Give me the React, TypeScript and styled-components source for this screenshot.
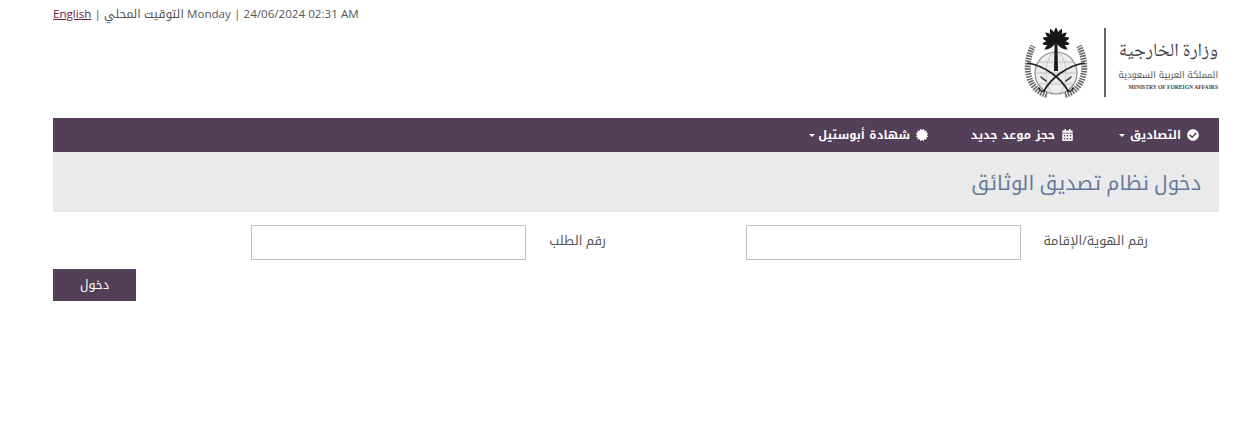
import React from "react";
import styled, { createGlobalStyle } from "styled-components";
import { FaCheckCircle, FaCalendarAlt, FaCertificate } from "react-icons/fa";

const Global = createGlobalStyle`
  html, body { margin: 0; padding: 0; background: #fff; }
  body { font-family: "Open Sans", "Noto Kufi Arabic", "DejaVu Sans", sans-serif; color: #444; }
`;

const Page = styled.div`
  direction: rtl;
  padding: 0 28px 0 53px;
  height: 428px;
  box-sizing: border-box;
  overflow: hidden;
`;
const TopBar = styled.div`
  display: flex;
  justify-content: flex-end;
  height: 27px;
  padding-top: 5px;
  box-sizing: border-box;
  font-size: 11.6px;
  line-height: 16px;
`;
const TopText = styled.div`
  direction: ltr;
  color: #555;
  white-space: nowrap;
  word-spacing: 0.15px;
`;
const TopArabic = styled.span`
  font-size: 11.9px;
`;
const TopLink = styled.a`
  color: #6b2344;
  text-decoration: underline;
`;
const Header = styled.header`
  display: flex;
  height: 91px;
  align-items: flex-start;
  justify-content: flex-start;
`;
const Nav = styled.nav`
  display: flex;
  align-items: center;
  height: 34px;
  background: #533f57;
  color: #fff;
  padding-right: 20px;
`;
const NavItem = styled.div<{ $w: number; $icon?: number }>`
  display: flex;
  align-items: center;
  width: ${(p) => p.$w}px;
  flex: none;
  gap: 6px;
  font-size: 11.5px;
  font-weight: 700;
  line-height: 20px;
  word-spacing: 1.5px;
  white-space: nowrap;
  svg { flex: none; width: ${(p) => p.$icon ?? 12}px; height: 12px; }
`;
const Caret = styled.span<{ $pull: number }>`
  width: 0;
  height: 0;
  margin-right: ${(p) => -p.$pull}px;
  border-left: 3px solid transparent;
  border-right: 3px solid transparent;
  border-top: 3px solid #fff;
`;
const TitleBar = styled.div`
  height: 60px;
  display: flex;
  align-items: center;
  padding-right: 18px;
  background: #eaeaea;
`;
const Title = styled.h1`
  margin: 0;
  font-size: 20.2px;
  line-height: 30px;
  font-weight: 400;
  color: #64799b;
`;
const Form = styled.form`
  display: grid;
  grid-template-columns: 198px 275px 69px 151px 275px;
  grid-template-rows: 35px;
  padding-top: 13px;
  align-items: center;
`;
const Label = styled.label<{ $col: number }>`
  grid-column: ${(p) => p.$col};
  padding-right: 71px;
  font-size: 12.75px;
  line-height: 20px;
  color: #555;
  white-space: nowrap;
  margin-top: -6px;
`;
const Input = styled.input<{ $col: number }>`
  grid-column: ${(p) => p.$col};
  height: 35px;
  box-sizing: border-box;
  border: 1px solid #bfbfbf;
  background: #fff;
  width: 100%;
  padding: 0 8px;
`;
const Actions = styled.div`
  display: flex;
  justify-content: flex-end;
  margin-top: 9px;
`;
const Submit = styled.button`
  width: 83px;
  height: 32px;
  border: 0;
  padding: 0;
  background: #533f57;
  color: #fff;
  font: inherit;
  font-size: 12.5px;
  line-height: 20px;
`;
const LogoArt = styled.svg`
  margin-top: -1px;
  flex: none;
`;

const frondAngles = [-100, -75, -50, -25, 0, 25, 50, 75, 100, 125, -125];

const Logo = () => (
  <LogoArt width="200" height="72" viewBox="0 0 200 72">
    <defs>
      <filter id="soft" x="-5%" y="-5%" width="110%" height="110%">
        <feGaussianBlur stdDeviation="0.35" />
      </filter>
    </defs>
    <g filter="url(#soft)">
      <g fill="none" stroke="#6a6a6a" strokeWidth="6" strokeDasharray="1.6 1">
        <path d="M28 69C10 64 3 42 14 20" />
        <path d="M46 69C64 64 71 42 60 20" />
      </g>
      <circle cx="37" cy="47" r="21" fill="#ececec" stroke="#8a8a8a" strokeWidth="1.2" />
      <g fill="none" stroke="#b5b5b5" strokeWidth="0.7">
        <ellipse cx="37" cy="47" rx="10" ry="21" />
        <path d="M16 47h42M19 36h36M19 58h36" />
      </g>
      <path d="M35.6 15h2.8l.6 30h-4z" fill="#1c1c1c" />
      <g fill="#161616">
        {frondAngles.map((a) => (
          <path key={a} d="M0 0C3 -4 3 -10 0 -14C-3 -10 -3 -4 0 0Z" transform={`translate(37 15.5) rotate(${a})`} />
        ))}
      </g>
      <g fill="none" stroke="#1e1e1e" strokeLinecap="round">
        <path d="M9 37C26 40 42 52 49 65" strokeWidth="1.7" />
        <path d="M65 37C48 40 32 52 25 65" strokeWidth="1.7" />
        <path d="M49 65c2 1 4 0 5-3M25 65c-2 1-4 0-5-3" strokeWidth="1.4" />
        <path d="M47 55l5-4M27 55l-5-4" strokeWidth="1.4" />
      </g>
    </g>
    <rect x="85" y="2" width="2" height="69" fill="#666" />
    <text x="199" y="30" textAnchor="start" direction="rtl" fontFamily="'Noto Naskh Arabic','DejaVu Serif',serif" fontSize="18.7" fill="#444">وزارة الخارجية</text>
    <text x="199" y="52" textAnchor="start" direction="rtl" fontFamily="'Noto Kufi Arabic','DejaVu Sans',sans-serif" fontSize="9" fill="#555">المملكة العربية السعودية</text>
    <text x="199" y="63" textAnchor="start" direction="ltr" style={{ textAnchor: "end" }} fontFamily="'Liberation Serif',serif" fontSize="5.6" fontWeight="700" fill="#444">MINISTRY OF FOREIGN AFFAIRS</text>
  </LogoArt>
);

export default function App() {
  return (
    <Page>
      <Global />
      <TopBar>
        <TopText>
          <TopLink href="#">English</TopLink> | <TopArabic>التوقيت المحلي</TopArabic> Monday | 24/06/2024 02:31 AM
        </TopText>
      </TopBar>
      <Header>
        <Logo />
      </Header>
      <Nav>
        <NavItem $w={125}>
          <FaCheckCircle />
          <span>التصاديق</span>
          <Caret $pull={1} />
        </NavItem>
        <NavItem $w={146} $icon={13}>
          <FaCalendarAlt />
          <span>حجز موعد جديد</span>
        </NavItem>
        <NavItem $w={130}>
          <FaCertificate />
          <span>شهادة أبوستيل</span>
          <Caret $pull={3} />
        </NavItem>
      </Nav>
      <TitleBar>
        <Title>دخول نظام تصديق الوثائق</Title>
      </TitleBar>
      <Form>
        <Label $col={1}>رقم الهوية/الإقامة</Label>
        <Input $col={2} />
        <Label $col={4}>رقم الطلب</Label>
        <Input $col={5} />
      </Form>
      <Actions>
        <Submit type="button">دخول</Submit>
      </Actions>
    </Page>
  );
}
